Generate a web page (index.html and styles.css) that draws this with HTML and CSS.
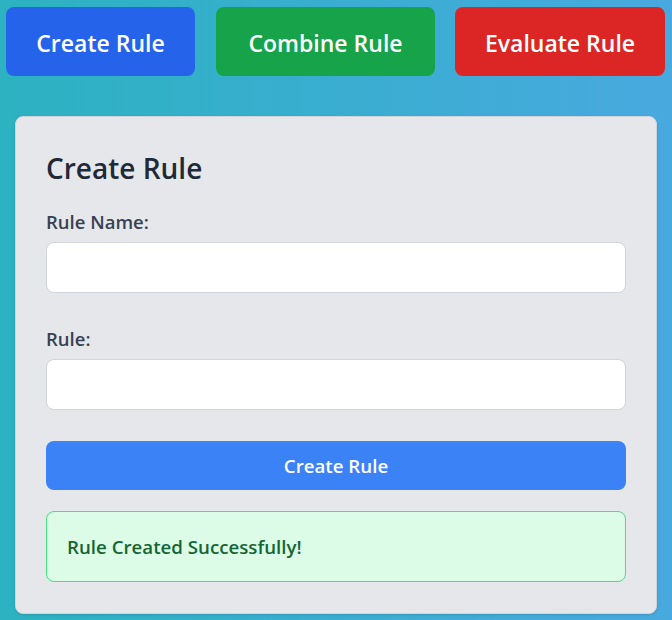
FILE: index.html
```html
<!DOCTYPE html>
<html lang="en">
<head>
<meta charset="utf-8">
<title>Rule Engine</title>
<link rel="stylesheet" href="styles.css">
</head>
<body>
  <div class="page">
    <nav class="tabs">
      <button class="tab tab-create">Create Rule</button>
      <button class="tab tab-combine">Combine Rule</button>
      <button class="tab tab-evaluate">Evaluate Rule</button>
    </nav>
    <section class="card">
      <h2 class="card-title">Create Rule</h2>
      <div class="field">
        <label class="field-label" for="rule-name">Rule Name:</label>
        <input class="field-input" id="rule-name" type="text">
      </div>
      <div class="field">
        <label class="field-label" for="rule">Rule:</label>
        <input class="field-input" id="rule" type="text">
      </div>
      <button class="submit">Create Rule</button>
      <div class="alert-success">Rule Created Successfully!</div>
    </section>
  </div>
</body>
</html>
```
FILE: styles.css
```css
* { box-sizing: border-box; }
html, body { margin: 0; padding: 0; }
body {
  width: 672px;
  height: 620px;
  overflow: hidden;
  font-family: "Open Sans", "Segoe UI", sans-serif;
  background: linear-gradient(to right, #2cb2c1, #48a9df);
}
.page {
  padding: 7px 7px 0 6px;
}
.tabs {
  display: flex;
  gap: 20px;
  margin-bottom: 40px;
}
.tab {
  height: 69px;
  padding: 2px 0 0 0;
  border: none;
  border-radius: 8px;
  color: #fff;
  font-family: inherit;
  font-size: 23px;
  font-weight: 600;
  text-align: center;
}
.tab-create { background: #2563eb; width: 189px; }
.tab-combine { background: #16a34a; width: 219px; margin-left: 1px; }
.tab-evaluate { background: #dc2626; width: 210px; }
.card {
  margin: 0 8px 0 9px;
  background: #e5e7eb;
  border: 1px solid #d1d5db;
  border-radius: 8px;
  box-shadow: 0 1px 3px rgba(0,0,0,0.12);
  padding: 31px 30px 31px 30px;
  height: 498px;
}
.card-title {
  margin: 2px 0 22px 0;
  font-size: 28px;
  line-height: 36px;
  font-weight: 600;
  color: #1f2937;
}
.field { margin-bottom: 32px; }
.field-label {
  display: block;
  font-size: 18.5px;
  line-height: 28px;
  font-weight: 600;
  color: #374151;
  margin-bottom: 6px;
}
.field-input {
  display: block;
  width: 100%;
  height: 51px;
  border: 1px solid #d1d5db;
  border-radius: 8px;
  background: #fff;
}
.submit {
  display: block;
  width: 100%;
  height: 49px;
  margin-top: -1px;
  border: none;
  border-radius: 8px;
  background: #3b82f6;
  color: #fff;
  font-family: inherit;
  font-size: 18.7px;
  font-weight: 600;
}
.alert-success {
  margin-top: 21px;
  height: 71px;
  padding: 0 20px;
  display: flex;
  align-items: center;
  background: #dcfce7;
  border: 1px solid #4ade80;
  border-radius: 8px;
  color: #166534;
  font-size: 18.7px;
  font-weight: 600;
}
```
